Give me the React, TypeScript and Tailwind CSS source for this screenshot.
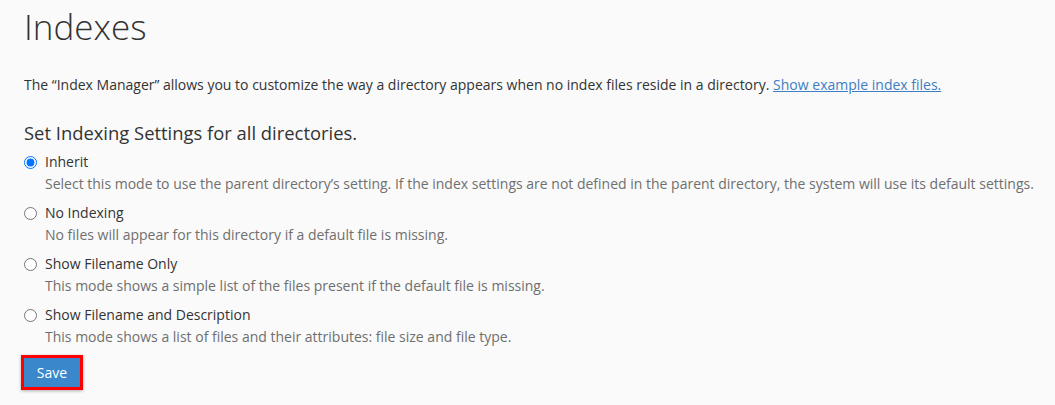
import React, { useState } from "react";

const options = [
  {
    id: "inherit",
    label: "Inherit",
    description:
      "Select this mode to use the parent directory’s setting. If the index settings are not defined in the parent directory, the system will use its default settings.",
  },
  {
    id: "none",
    label: "No Indexing",
    description: "No files will appear for this directory if a default file is missing.",
  },
  {
    id: "filename",
    label: "Show Filename Only",
    description: "This mode shows a simple list of the files present if the default file is missing.",
  },
  {
    id: "description",
    label: "Show Filename and Description",
    description: "This mode shows a list of files and their attributes: file size and file type.",
  },
];

export default function App() {
  const [mode, setMode] = useState("inherit");

  return (
    <div
      className="min-h-[405px] bg-[#fafafa] pl-[24px] pr-[8px] text-[#333]"
      style={{ fontFamily: '"Open Sans", sans-serif' }}
    >
      <h1 className="pt-[8px] text-[35px] leading-[38px] font-light text-[#333]">Indexes</h1>

      <p className="mt-[29px] text-[14px] leading-[20px]">
        The “Index Manager” allows you to customize the way a directory appears when no index files reside in a
        directory.{" "}
        <a href="#" className="text-[#3d7ec4] underline">
          Show example index files.
        </a>
      </p>

      <h2 className="mt-[26px] text-[18.4px] leading-[24px]">Set Indexing Settings for all directories.</h2>

      <div className="mt-[7px] flex flex-col">
        {options.map((option) => (
          <div key={option.id} className="mb-[9px]">
            <label className="flex items-center gap-[8px] text-[14px] leading-[20px]">
              <input
                type="radio"
                name="indexing"
                className="m-0 h-[13px] w-[13px]"
                checked={mode === option.id}
                onChange={() => setMode(option.id)}
              />
              <span>{option.label}</span>
            </label>
            <div className="mt-[2px] pl-[21px] text-[14px] leading-[20px] text-[#6f6f6f]">
              {option.description}
            </div>
          </div>
        ))}
      </div>

      <button
        type="button"
        className="-ml-[3px] -mt-[1px] h-[35px] w-[62px] border-[3px] border-[#f00] bg-[#3a87cc] text-[14px] text-white shadow-[0_1px_3px_rgba(0,0,0,0.3)]"
      >
        Save
      </button>
    </div>
  );
}
